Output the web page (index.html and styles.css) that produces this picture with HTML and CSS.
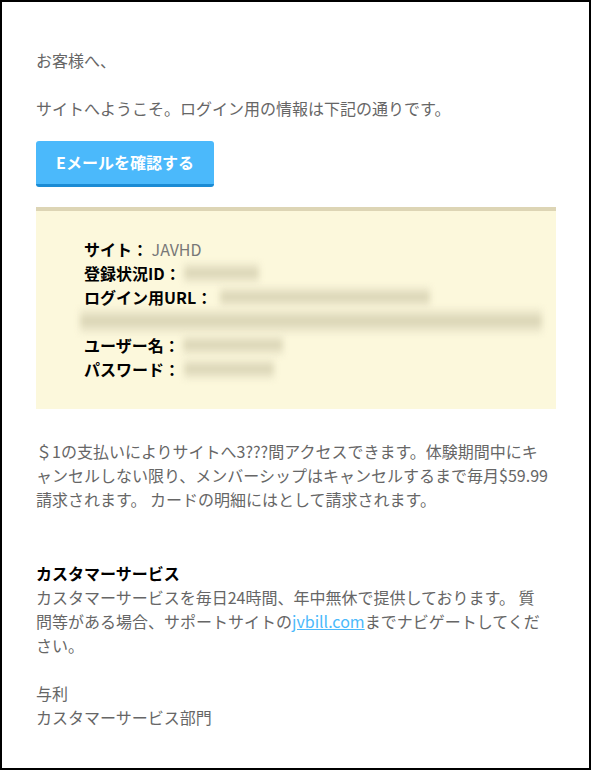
FILE: index.html
```html
<!DOCTYPE html>
<html lang="ja">
<head>
<meta charset="utf-8">
<title>JAVHD</title>
<link rel="stylesheet" href="styles.css">
</head>
<body>
<div class="frame">
  <p class="greet">お客様へ、</p>
  <p class="intro">サイトへようこそ。ログイン用の情報は下記の通りです。</p>
  <a class="btn" href="#">Eメールを確認する</a>
  <div class="info">
    <div class="row"><b>サイト：</b> <span class="val">JAVHD</span></div>
    <div class="row"><b>登録状況ID：</b> <span class="blur b-id"></span></div>
    <div class="row"><b>ログイン用URL：</b> <span class="blur b-url1"></span></div>
    <div class="row"><span class="blur b-url2"></span></div>
    <div class="row"><b>ユーザー名：</b> <span class="blur b-user"></span></div>
    <div class="row"><b>パスワード：</b> <span class="blur b-pass"></span></div>
  </div>
  <p class="note">＄1の支払いによりサイトへ3???間アクセスできます。体験期間中にキ<br>ャンセルしない限り、メンバーシップはキャンセルするまで毎月$59.99請求されます。 カードの明細にはとして請求されます。</p>
  <h3 class="cs-title">カスタマーサービス</h3>
  <p class="cs-text">カスタマーサービスを毎日24時間、年中無休で提供しております。 質問等がある場合、サポートサイトの<a class="link" href="#">jvbill.com</a>までナビゲートしてください。</p>
  <p class="sign">与利<br>カスタマーサービス部門</p>
</div>
</body>
</html>
```
FILE: styles.css
```css
html, body {
  margin: 0;
  padding: 0;
  background: #fff;
}
.frame {
  box-sizing: border-box;
  width: 591px;
  height: 770px;
  border: 2px solid #000;
  padding: 46px 34px 0 34px;
  font-family: "Noto Sans CJK JP", "Noto Sans", sans-serif;
  font-size: 16px;
  line-height: 24px;
  color: #666;
}
p {
  margin: 0;
}
.greet {
  margin-bottom: 24px;
}
.btn {
  display: inline-block;
  box-sizing: border-box;
  margin-top: 21px;
  height: 46px;
  width: 178px;
  padding-top: 9px;
  text-align: center;
  background: #4bb9fb;
  border-bottom: 3px solid #1b8bd4;
  border-radius: 3px;
  color: #fff;
  font-weight: bold;
  font-size: 16px;
  line-height: 24px;
  text-decoration: none;
}
.info {
  margin-top: 20px;
  width: 520px;
  box-sizing: border-box;
  background: #fcf8dc;
  border-top: 4px solid #ddd5b5;
  padding: 26px 48px 28px 48px;
}
.row {
  height: 24px;
  white-space: nowrap;
}
.row b {
  color: #000;
  font-weight: bold;
}
.val {
  color: #777;
}
.blur {
  display: inline-block;
  vertical-align: top;
  height: 20px;
  margin-top: 2px;
  background:
    linear-gradient(to bottom, transparent 30%, #dcd7b8 30%, #dcd7b8 70%, transparent 70%),
    #ece7cb;
  filter: blur(3px);
}
.b-id { width: 75px; }
.b-url1 { width: 210px; margin-left: 4px; }
.b-url2 { width: 462px; margin-left: -4px; height: 24px; margin-top: 0; }
.b-user { width: 100px; }
.b-pass { width: 90px; }
.note {
  margin-top: 30px;
  max-width: 520px;
}
.cs-title {
  margin: 50px 0 0 0;
  font-size: 16px;
  line-height: 24px;
  font-weight: bold;
  color: #000;
}
.cs-text {
  max-width: 510px;
}
.link {
  color: #4bb9fb;
  text-decoration: underline;
}
.sign {
  margin-top: 24px;
}
```
